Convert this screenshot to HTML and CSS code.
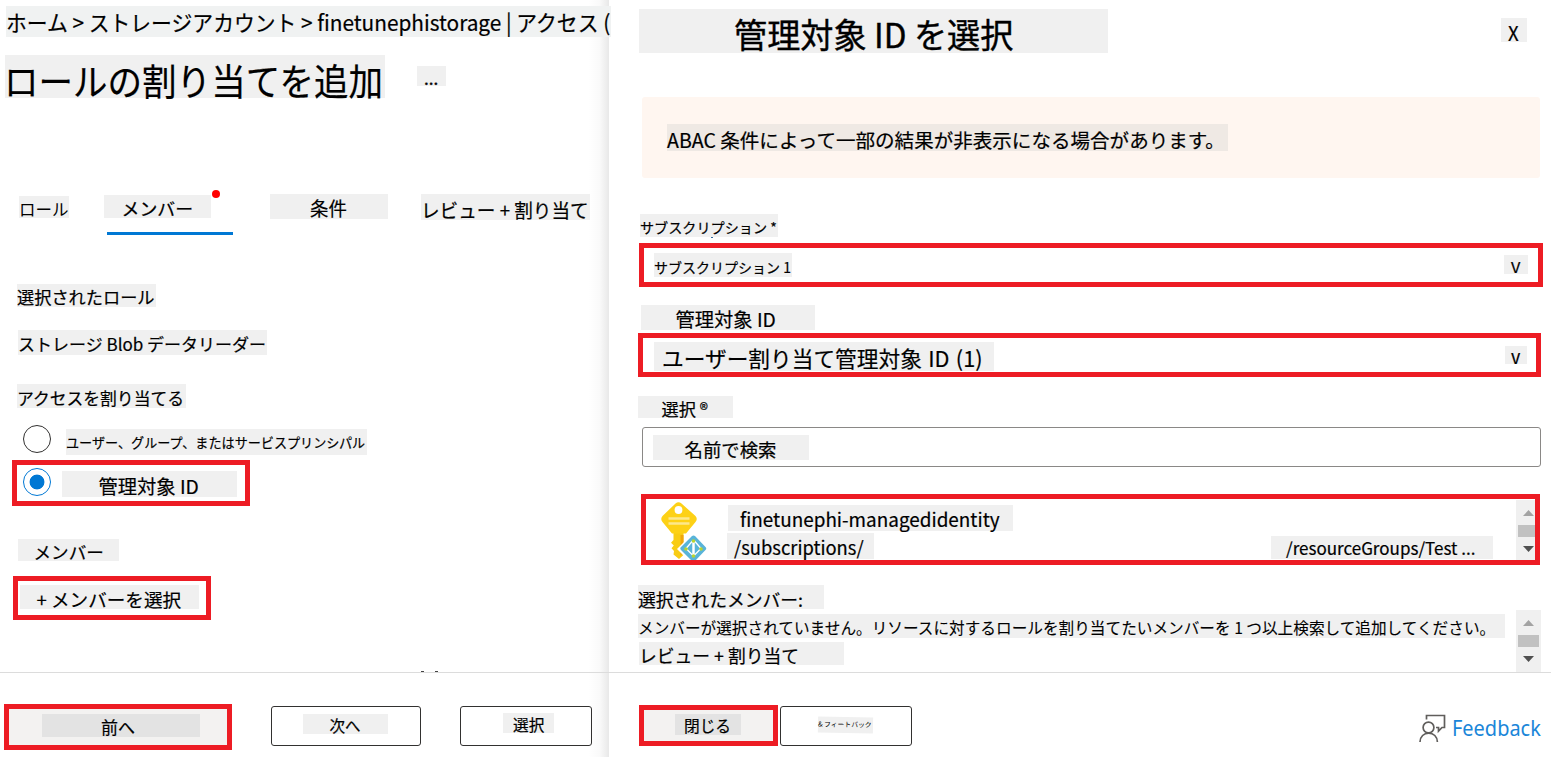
FILE: index.html
```html
<!DOCTYPE html>
<html lang="ja">
<head>
<meta charset="utf-8">
<title>ロールの割り当てを追加</title>
<link rel="stylesheet" href="styles.css">
</head>
<body>
<div class="page">
  <main class="pane assign">
    <div class="pane-body">
      <nav class="chip crumb"><span>ホーム &gt; ストレージアカウント &gt; finetunephistorage | アクセス (</span></nav>
      <header class="row head">
        <h1 class="chip title"><span>ロールの割り当てを追加</span></h1>
        <div class="chip more"><span>...</span></div>
      </header>
      <div class="row tabs">
        <div class="chip tab-role"><span>ロール</span></div>
        <div class="tab-active">
          <div class="chip tab-member"><span>メンバー</span></div>
          <i class="alert-dot"></i>
        </div>
        <div class="chip tab-cond"><span>条件</span></div>
        <div class="chip tab-review"><span>レビュー + 割り当て</span></div>
      </div>
      <div class="chip sel-role"><span>選択されたロール</span></div>
      <div class="chip role-name"><span>ストレージ Blob データリーダー</span></div>
      <div class="chip access"><span>アクセスを割り当てる</span></div>
      <div class="row opt-user">
        <i class="radio"></i>
        <div class="chip user-text"><span>ユーザー、グループ、またはサービスプリンシパル</span></div>
      </div>
      <div class="row mark opt-managed">
        <i class="radio on"></i>
        <div class="chip managed-text"><span>管理対象 ID</span></div>
      </div>
      <div class="chip members"><span>メンバー</span></div>
      <div class="mark add-member">
        <div class="chip add-text"><span>+ メンバーを選択</span></div>
      </div>
      <i class="speck speck-a"></i><i class="speck speck-b"></i>
    </div>
    <footer class="row foot">
      <div class="mark prev"><div class="chip prev-text"><span>前へ</span></div></div>
      <div class="btn next"><div class="chip next-text"><span>次へ</span></div></div>
      <div class="btn pick"><div class="chip pick-text"><span>選択</span></div></div>
    </footer>
  </main>
  <aside class="pane select">
    <div class="pane-body">
      <header class="row side-head">
        <h2 class="chip side-title"><span>管理対象 ID を選択</span></h2>
        <div class="chip close-x"><span>X</span></div>
      </header>
      <div class="banner"><div class="chip banner-text"><span>ABAC 条件によって一部の結果が非表示になる場合があります。</span></div></div>
      <div class="chip sub-label"><span>サブスクリプション *</span><i class="speck speck-c"></i></div>
      <div class="row mark sub-box">
        <div class="chip sub-value"><span>サブスクリプション 1</span></div>
        <div class="chip sub-v"><span>V</span></div>
      </div>
      <div class="chip mi-label"><span>管理対象 ID</span></div>
      <div class="row mark mi-box">
        <div class="chip mi-value"><span>ユーザー割り当て管理対象 ID (1)</span></div>
        <div class="chip mi-v"><span>v</span></div>
      </div>
      <div class="chip search-label"><span>選択 ®</span></div>
      <div class="search"><div class="chip search-text"><span>名前で検索</span></div></div>
      <div class="row mark result">
        <svg class="key" width="48" height="60" viewBox="0 0 48 60">
          <path d="M12.500 31V38l-2.500 2.800 2.800 2.700-2.300 2.700 2.500 2.800-.5 3.500L18 57l4.500-4V31Z" fill="#f8cc15"/>
          <path d="M19.500 33h3v17l-3 4Z" fill="#f0a50c"/>
          <path d="M14.500 1.500q3-2.500 6 0L34.500 14q2.500 3 0 6L25 31.500H11L1.500 20q-2.500-3 0-6Z" fill="#fdd116"/>
          <circle cx="17.500" cy="8" r="3.900" fill="#fff"/>
          <path d="M7.500 16.500h21M7.500 21.500h21" stroke="#fde88c" stroke-width="2.600"/>
          <path d="M32.500 30.500 49 47 32.500 63.500 16 47Z" fill="#fff"/>
          <path d="M31 34q1.500-1.200 3 0L44.500 45q1.500 1.500 0 3L34 59h-3L20 48q-1.500-1.500 0-3Z" fill="#59b4d9"/>
          <path d="M32.500 39v15M31.500 39 25 46.500l7.500 7.500 7.500-7.500L33.500 39" fill="none" stroke="#fff" stroke-width="1.300"/>
          <path d="M32.500 39v15" stroke="#fff" stroke-width="2.400"/>
          <g fill="#b8d432"><circle cx="32.500" cy="39" r="1.800"/><circle cx="25" cy="47" r="1.800"/><circle cx="40" cy="47" r="1.800"/><circle cx="32.500" cy="54" r="1.800"/></g>
        </svg>
        <div class="identity">
          <div class="chip id-name"><span>finetunephi-managedidentity</span></div>
          <div class="row">
            <div class="chip id-sub"><span>/subscriptions/</span></div>
            <div class="chip id-group"><span>/resourceGroups/Test ...</span></div>
          </div>
        </div>
        <div class="scroll scroll-a"><i class="up"></i><i class="thumb"></i><i class="down"></i></div>
      </div>
      <div class="row chosen">
        <div class="chosen-text">
          <div class="chip ch-head"><span>選択されたメンバー:</span></div>
          <div class="chip ch-none"><span>メンバーが選択されていません。リソースに対するロールを割り当てたいメンバーを 1 つ以上検索して追加してください。</span></div>
          <div class="chip ch-review"><span>レビュー + 割り当て</span></div>
        </div>
        <div class="scroll scroll-b"><i class="up"></i><i class="thumb"></i><i class="down"></i></div>
      </div>
    </div>
    <footer class="row foot">
      <div class="mark close"><div class="chip close-text"><span>閉じる</span></div></div>
      <div class="btn fb"><div class="chip fb-text"><span>&amp; フィートバック</span></div></div>
      <a class="row feedback">
        <svg width="28" height="29" viewBox="0 0 28 29" fill="none" stroke="#605e5c" stroke-width="1.700">
          <circle cx="9.500" cy="13.500" r="5.400"/>
          <path d="M1 28c0-5.500 4-8.900 8.700-8.900s8.700 3.400 8.700 8.900"/>
          <path d="M7.500 5.500V1.500H25.500V13.500H23l-3.500 3.700V13.500H17"/>
        </svg>
        <span>Feedback</span>
      </a>
    </footer>
  </aside>
</div>
</body>
</html>
```
FILE: styles.css
```css
* { box-sizing: border-box; }
body {
  margin: 0;
  background: #fff;
  color: #000;
  font-family: "Noto Sans CJK JP", "Noto Sans", sans-serif;
}
h1, h2 { margin: 0; font-weight: 400; }
.page { display: flex; width: 1551px; height: 757px; overflow: hidden; }
.pane { display: flex; flex-direction: column; height: 757px; }
.pane-body { display: flow-root; position: relative; height: 672px; }
.row { display: flex; align-items: flex-start; }
.assign {
  width: 609px;
  background: linear-gradient(to right, rgba(0,0,0,0) 588px, rgba(0,0,0,.025) 600px, rgba(0,0,0,.09) 609px);
}
.select { width: 942px; }
.foot { height: 85px; border-top: 1px solid #dcdcdc; }

/* Grey text plates: size, line position, font size and text offset per plate */
.chip {
  flex: none;
  width: var(--w);
  height: var(--h);
  line-height: var(--lh);
  font-size: var(--fs);
  background: #f0f0f0;
  white-space: nowrap;
  -webkit-text-stroke: .2px #000;
}
.chip > span {
  display: inline-block;
  margin-left: var(--tx, 0);
  transform: scaleX(var(--sx, 1));
  transform-origin: 0 50%;
}
.mark { border: 5px solid #ed1c24; }
.btn { height: 40px; margin-top: 33px; border: 1px solid #323130; border-radius: 3px; }
.speck { position: absolute; width: 3px; height: 1px; background: #444; }

.crumb { --w: 605px; --h: 31px; --lh: 31px; --fs: 22px; --sx: .946; margin: 6px 0 0 6px; background: #f0f2f2; position: relative; }
.head { margin: 18px 0 0 5px; height: 43px; }
.title { --w: 380px; --h: 43px; --lh: 50px; --fs: 37px; --sx: .933; --tx: -1px; }
.more { --w: 29px; --h: 20px; --lh: 24px; --fs: 17px; --tx: 7px; margin: 11px 0 0 32px; -webkit-text-stroke-width: .4px; }
.tabs { margin: 96px 0 0 19px; height: 41px; }
.tab-role { --w: 50px; --h: 22px; --lh: 27px; --fs: 16.500px; margin-top: 2px; -webkit-text-stroke-width: 0; }
.tab-active { position: relative; width: 129px; height: 41px; margin-left: 35px; padding-top: 1px; }
.tab-active::after { content: ""; display: block; width: 126px; height: 3px; margin: 14px 0 0 3px; background: #0078d4; }
.tab-member { --w: 107px; --h: 23px; --lh: 27px; --fs: 17.900px; --tx: 17.500px; }
.alert-dot { position: absolute; left: 108px; top: -4px; width: 8px; height: 8px; border-radius: 50%; background: #f00; }
.tab-cond { --w: 118px; --h: 25px; --lh: 27px; --fs: 18.800px; --sx: .98; --tx: 40px; margin-left: 37px; }
.tab-review { --w: 169px; --h: 26px; --lh: 31px; --fs: 19px; --sx: .98; margin-left: 33px; }
.sel-role { --w: 139px; --h: 23px; --lh: 25px; --fs: 17.200px; margin: 49px 0 0 17px; }
.role-name { --w: 249px; --h: 25px; --lh: 28px; --fs: 17px; margin: 23px 0 0 18px; }
.access { --w: 169px; --h: 24px; --lh: 28px; --fs: 16.800px; margin: 29px 0 0 17px; }
.radio { flex: none; width: 28px; height: 28px; border: 1px solid #323130; border-radius: 50%; }
.radio.on { border-color: #0078d4; background: radial-gradient(circle, #0078d4 7px, #fff 7.800px); }
.opt-user { margin: 17px 0 0 23px; height: 30px; }
.user-text { --w: 301px; --h: 26px; --lh: 27px; --fs: 13.100px; margin: 4px 0 0 15px; }
.opt-managed { width: 238px; height: 46px; margin: 5px 0 0 12px; padding: 3px 0 0 6px; }
.managed-text { --w: 175px; --h: 26px; --lh: 30px; --fs: 19.300px; --tx: 36.500px; margin: 3px 0 0 11px; }
.members { --w: 101px; --h: 22px; --lh: 26px; --fs: 17.600px; --tx: 15.500px; margin: 33px 0 0 18px; }
.add-member { width: 198px; height: 44px; margin: 15px 0 0 13px; padding: 4px 0 0 2px; }
.add-text { --w: 179px; --h: 24px; --lh: 27px; --fs: 18.600px; --tx: 16.500px; }
.speck-a { left: 421px; bottom: 0; }
.speck-b { left: 435px; bottom: 0; }
.prev { width: 228px; height: 46px; margin: 31px 0 0 4px; padding: 5px 0 0 33px; background: #f3f2f1; }
.prev-text { --w: 158px; --h: 23px; --lh: 26px; --fs: 17px; --tx: 59px; background: #e3e3e3; }
.next { width: 150px; margin-left: 39px; padding: 7px 0 0 31px; }
.next-text { --w: 85px; --h: 20px; --lh: 22px; --fs: 15.500px; --tx: 26.500px; }
.pick { width: 132px; margin-left: 39px; padding: 6px 0 0 42px; }
.pick-text { --w: 51px; --h: 20px; --lh: 24px; --fs: 15.700px; --tx: 10px; }

.side-head { margin: 9px 0 0 30px; height: 44px; }
.side-title { --w: 469px; --h: 44px; --lh: 50px; --fs: 34px; --sx: .975; --tx: 94.500px; -webkit-text-stroke-width: .4px; }
.close-x { --w: 26px; --h: 24px; --lh: 30px; --fs: 20px; --sx: .93; --tx: 6.500px; margin: 9px 0 0 393px; }
.banner { width: 898px; height: 81px; margin: 44px 0 0 33px; padding: 27px 0 0 25px; border-radius: 3px; background: #fff6f0; }
.banner-text { --w: 561px; --h: 27px; --lh: 31px; --fs: 19.400px; --sx: 1.008; background: #efe9e4; }
.sub-label { --w: 138px; --h: 23px; --lh: 26px; --fs: 14px; --sx: 1.008; position: relative; margin: 36px 0 0 31px; }
.speck-c { left: 71px; top: 23px; width: 2px; background: #36699b; }
.sub-box { width: 904px; height: 44px; margin: 6px 0 0 30px; padding: 5px 0 0 10px; }
.sub-value { --w: 138px; --h: 24px; --lh: 28px; --fs: 14px; }
.sub-v { --w: 24px; --h: 19px; --lh: 23px; --fs: 15px; --sx: 1.080; --tx: 6.500px; margin: 2px 0 0 712px; }
.mi-label { --w: 174px; --h: 25px; --lh: 29px; --fs: 19.300px; --tx: 34.500px; margin: 18px 0 0 32px; }
.mi-box { width: 903px; height: 44px; margin: 3px 0 0 29px; padding: 4px 0 0 11px; }
.mi-value { --w: 340px; --h: 29px; --lh: 31px; --fs: 21.700px; --tx: 8px; }
.mi-value > span { word-spacing: 1.500px; }
.mi-v { --w: 22px; --h: 18px; --lh: 20px; --fs: 19px; --sx: .94; --tx: 5.500px; margin: 4px 0 0 511px; }
.search-label { --w: 95px; --h: 22px; --lh: 26px; --fs: 17.200px; --tx: 23.500px; margin: 19px 0 0 29px; }
.search { width: 899px; height: 40px; margin: 9px 0 0 33px; padding: 7px 0 0 10px; border: 1px solid #8a8886; border-radius: 3px; }
.search-text { --w: 156px; --h: 25px; --lh: 28px; --fs: 18.400px; --tx: 31.500px; }
.result { width: 899px; height: 71px; margin: 27px 0 0 32px; padding-left: 15px; overflow: hidden; }
.key { flex: none; margin-top: 3px; }
.identity { flex: none; width: 789px; margin: 6px 0 0 18px; }
.id-name { --w: 285px; --h: 26px; --lh: 27px; --fs: 18.900px; --tx: 12px; margin-left: 1px; }
.id-sub { --w: 147px; --h: 26px; --lh: 27px; --fs: 19px; --sx: .967; --tx: 7px; margin-top: 2px; }
.id-group { --w: 222px; --h: 23px; --lh: 24px; --fs: 17px; --tx: 15px; margin: 5px 0 0 397px; }
.scroll { flex: none; width: 25px; background: #f0f0f0; padding-left: 2px; }
.scroll i { display: block; }
.up { width: 11px; height: 6px; margin-left: 5px; background: #a3a3a3; clip-path: polygon(50% 0, 100% 100%, 0 100%); }
.down { width: 11px; height: 6px; margin: 9px 0 0 5px; background: #505050; clip-path: polygon(0 0, 100% 0, 50% 100%); }
.thumb { width: 21px; height: 12px; margin-top: 9px; background: #c1c1c1; }
.scroll-a { height: 60px; margin-top: 1px; padding-top: 10px; }
.chosen { margin: 20px 0 0 29px; height: 87px; }
.chosen-text { width: 878px; }
.ch-head { --w: 186px; --h: 24px; --lh: 28px; --fs: 17.800px; }
.ch-none { --w: 867px; --h: 24px; --lh: 28px; --fs: 15.650px; margin-top: 5px; -webkit-text-stroke-width: .1px; }
.ch-review { --w: 205px; --h: 23px; --lh: 26px; --fs: 17.800px; margin: 4px 0 0 1px; }
.scroll-b { height: 62px; margin-top: 25px; padding-top: 10px; }
.close { width: 139px; height: 41px; margin: 32px 0 0 30px; padding: 4px 0 0 31px; background: #f3f2f1; }
.close-text { --w: 66px; --h: 21px; --lh: 24px; --fs: 15.700px; --tx: 9px; background: #e3e3e3; }
.fb { width: 132px; margin-left: 2px; padding: 10px 0 0 37px; }
.fb-text { --w: 55px; --h: 16px; --lh: 15px; --fs: 6.800px; transform: rotate(1deg); -webkit-text-stroke-width: 0; }
.feedback { margin: 41px 0 0 507px; color: #1a86d9; }
.feedback svg { flex: none; }
.feedback span {
  margin-left: 4.500px;
  font: 21px/29px "Noto Sans", "Open Sans", sans-serif;
  transform: scaleX(.95);
  transform-origin: 0 50%;
}
```
